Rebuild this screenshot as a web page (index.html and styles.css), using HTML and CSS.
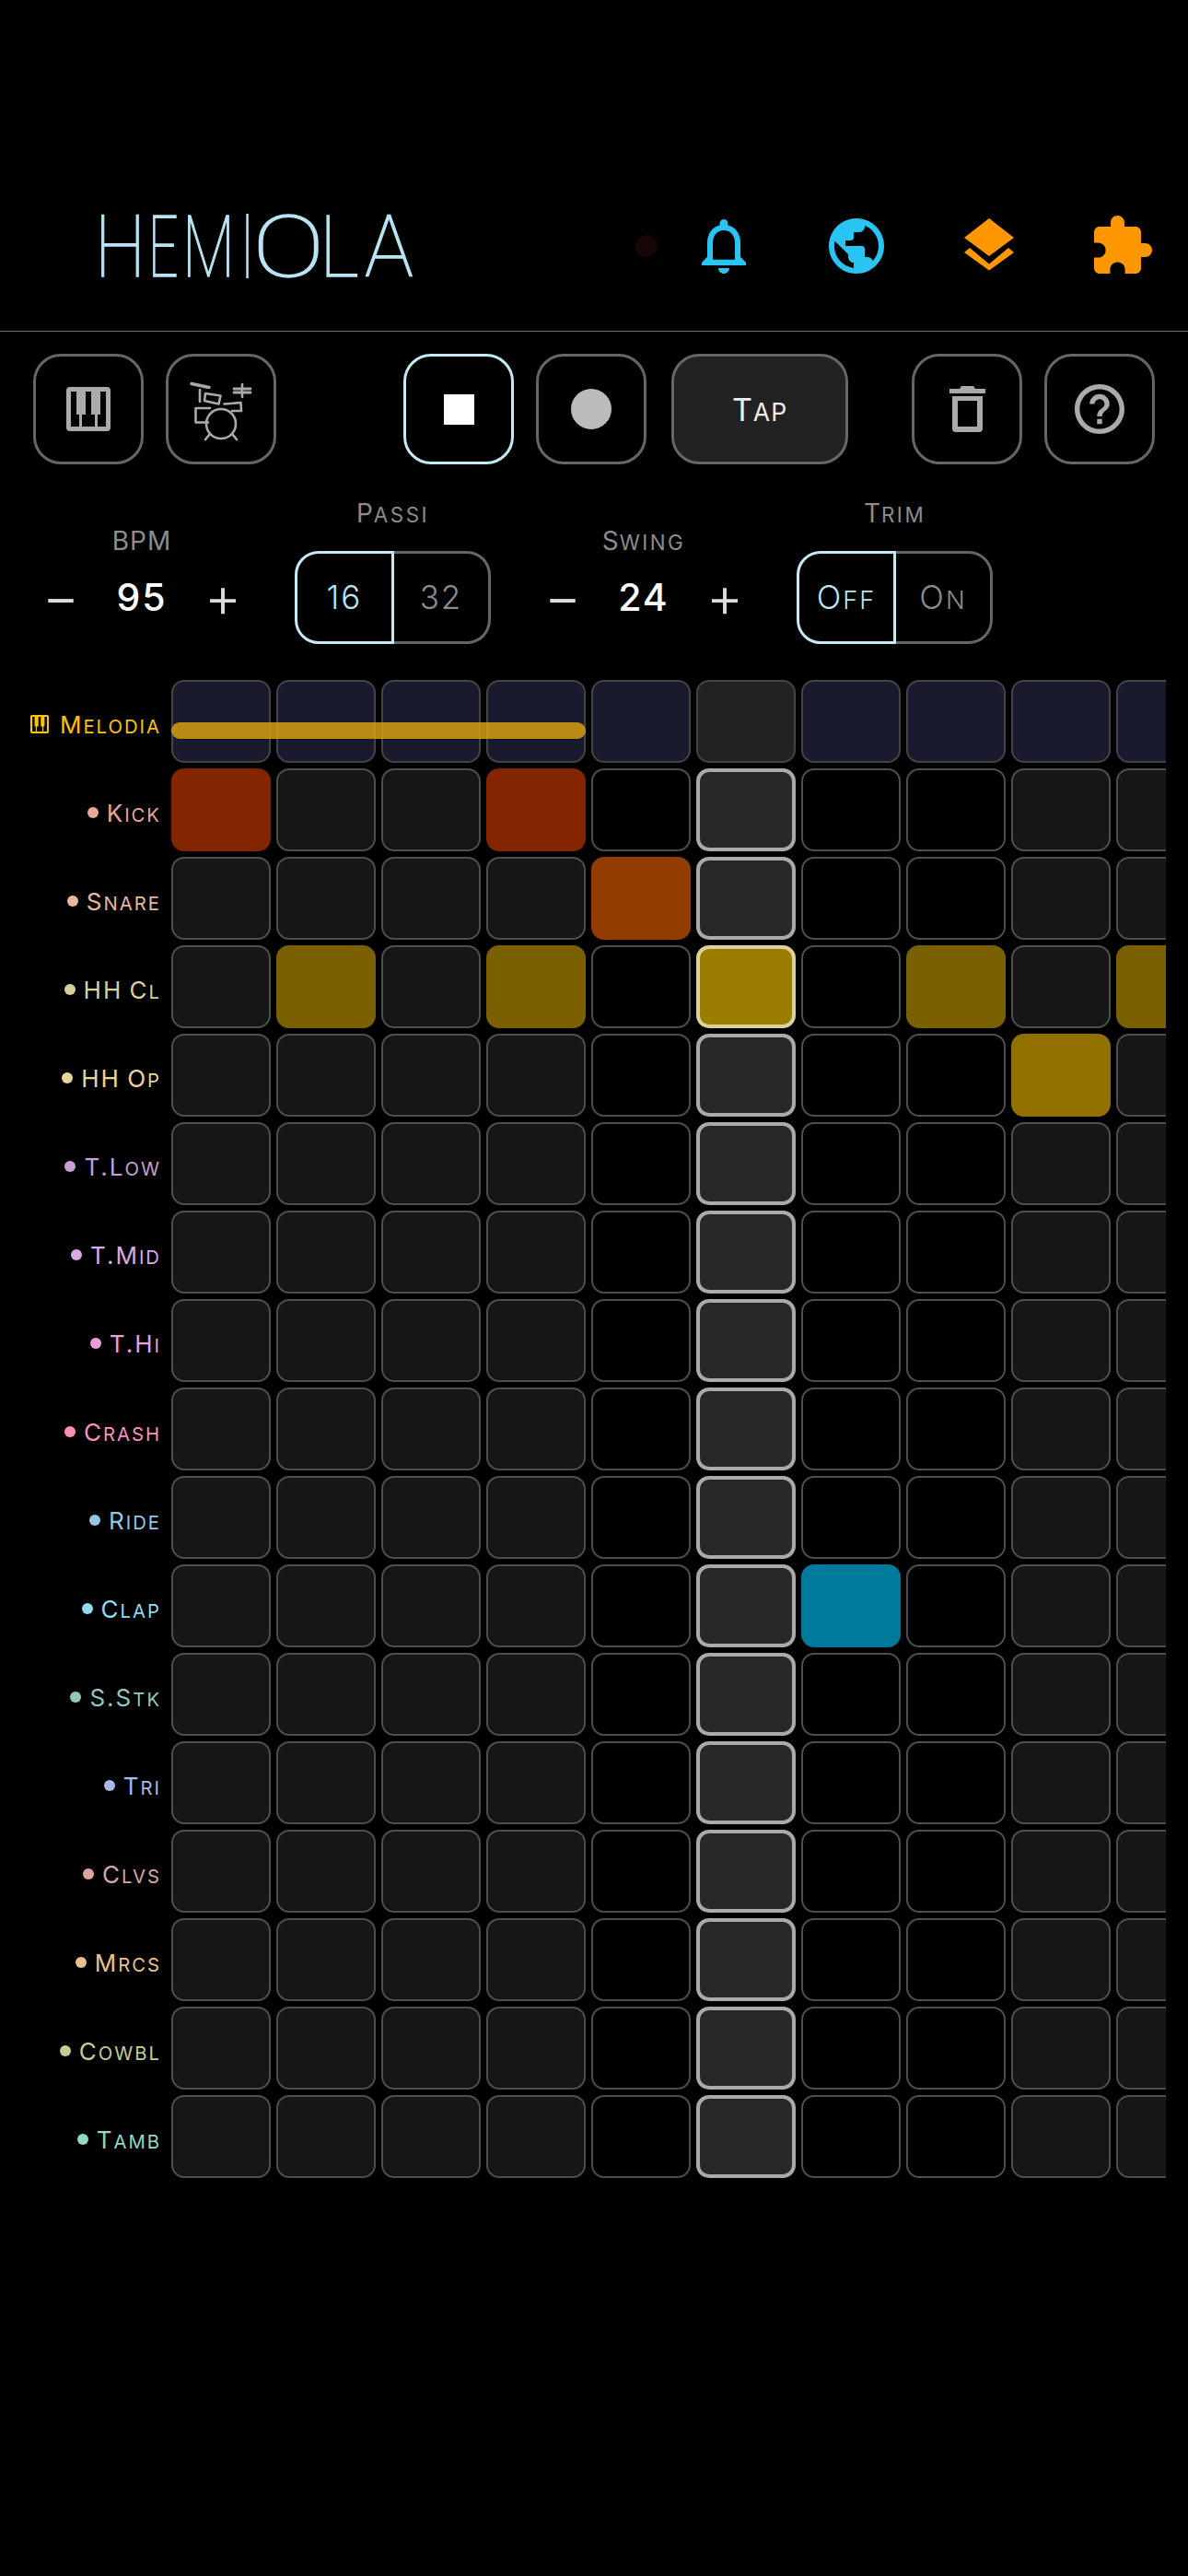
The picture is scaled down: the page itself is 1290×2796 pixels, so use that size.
FILE: index.html
```html
<!DOCTYPE html>
<html lang="it">
<head>
<meta charset="utf-8">
<title>Hemiola</title>
<link rel="stylesheet" href="styles.css">
</head>
<body>
<header class="header">
  <h1 class="logo"><span class="l l-h">H</span><span class="l l-e">E</span><span class="l l-m">M</span><span class="l l-i">I</span><span class="l l-o">O</span><span class="l l-l">L</span><span class="l l-a">A</span></h1>
  <span class="status-dot"></span>
  <svg class="hi hi-bell" viewBox="4 2.5 16 19.5" preserveAspectRatio="none"><path d="M12 22c1.1 0 2-.9 2-2h-4c0 1.1.9 2 2 2zm6-6v-5c0-3.07-1.63-5.64-4.5-6.32V4c0-.83-.67-1.5-1.5-1.5s-1.5.67-1.5 1.5v.68C7.64 5.36 6 7.92 6 11v5l-2 2v1h16v-1l-2-2zm-2 1H8v-6c0-2.48 1.51-4.5 4-4.5s4 2.02 4 4.5v6z"/></svg>
  <svg class="hi hi-globe" viewBox="2 2 20 20"><path d="M12 2C6.48 2 2 6.48 2 12s4.48 10 10 10 10-4.48 10-10S17.52 2 12 2zm-1 17.93c-3.95-.49-7-3.85-7-7.93 0-.62.08-1.21.21-1.79L9 15v1c0 1.1.9 2 2 2v1.93zm6.9-2.54c-.26-.81-1-1.39-1.9-1.39h-1v-3c0-.55-.45-1-1-1H8v-2h2c.55 0 1-.45 1-1V7h2c1.1 0 2-.9 2-2v-.41c2.93 1.19 5 4.06 5 7.41 0 2.08-.8 3.97-2.1 5.39z"/></svg>
  <svg class="hi hi-layers" viewBox="0 0 45 57" preserveAspectRatio="none"><polygon points="22.5,0 45,21 22.5,41 0,21"/><polygon points="5,32 22.5,49.5 40,32 45,37 22.5,56.5 0,37"/></svg>
  <svg class="hi hi-puzzle" viewBox="2 1 21 21"><path d="M20.5 11H19V7c0-1.1-.9-2-2-2h-4V3.5C13 2.12 11.88 1 10.5 1S8 2.12 8 3.5V5H4c-1.1 0-1.99.9-1.99 2v3.8H3.5c1.49 0 2.7 1.21 2.7 2.7s-1.21 2.7-2.7 2.7H2V20c0 1.1.9 2 2 2h3.8v-1.5c0-1.49 1.21-2.7 2.7-2.7 1.49 0 2.7 1.21 2.7 2.7V22H17c1.1 0 2-.9 2-2v-4h1.5c1.38 0 2.5-1.12 2.5-2.5S21.88 11 20.5 11z"/></svg>
</header>

<section class="toolbar">
  <button class="btn"><svg class="tb-piano" viewBox="0 0 48 48"><path fill-rule="evenodd" d="M4 0H44A4 4 0 0 1 48 4V44A4 4 0 0 1 44 48H4A4 4 0 0 1 0 44V4A4 4 0 0 1 4 0ZM5 5H11V30H14V43H5ZM21 5H27V30H31V43H17V30H21ZM37 5H43V43H34V30H37Z"/></svg></button>
  <button class="btn"><svg class="tb-drums" viewBox="206 412 68 66"><g fill="none" stroke="#aaa" stroke-width="2.6" stroke-linecap="round" stroke-linejoin="round"><path d="M208 414.5L227 418.5" stroke-width="3.4"/><path d="M217 421V434"/><path d="M223 425L239.5 427.5L237.5 436.5L222 433Z"/><path d="M243.5 436.5L261.5 435L262 444L252 444"/><path d="M228 441H212.5V456.5H226"/><circle cx="240" cy="458" r="16"/><path d="M227.5 469.5L223 475M252.5 469.5L257 475"/><path d="M254 420H272M254 424H272" stroke-width="2.8"/><path d="M263 415V429"/></g></svg></button>
  <button class="btn btn-on btn-stop"><span class="stop-square"></span></button>
  <button class="btn btn-rec"><span class="rec-circle"></span></button>
  <button class="btn btn-tap">T<span class="sc">ap</span></button>
  <button class="btn btn-trash"><svg class="tb-trash" viewBox="0 0 39 50"><path fill="#aaa" fill-rule="evenodd" d="M0 3H11L13 0H26L28 3H39V8H0ZM3 11H36V46A4 4 0 0 1 32 50H7A4 4 0 0 1 3 46ZM9 16V44H30V16Z"/></svg></button>
  <button class="btn"><svg class="tb-help" viewBox="2 2 20 20"><path d="M11 18h2v-2h-2v2zm1-16C6.48 2 2 6.48 2 12s4.48 10 10 10 10-4.48 10-10S17.52 2 12 2zm0 18c-4.41 0-8-3.59-8-8s3.59-8 8-8 8 3.59 8 8-3.59 8-8 8zm0-14c-2.21 0-4 1.79-4 4h2c0-1.1.9-2 2-2s2 .9 2 2c0 2-3 1.75-3 5h2c0-2.25 3-2.5 3-5 0-2.21-1.79-4-4-4z"/></svg></button>
</section>

<section class="controls">
  <div class="stepper">
    <div class="ctl-label">BPM</div>
    <div class="stepper-row"><span class="sign">−</span><span class="value">95</span><span class="sign">+</span></div>
  </div>
  <div class="seg-col">
    <div class="ctl-label">P<span class="sc">assi</span></div>
    <div class="seg"><span class="seg-item seg-on">16</span><span class="seg-item">32</span></div>
  </div>
  <div class="stepper">
    <div class="ctl-label">S<span class="sc">wing</span></div>
    <div class="stepper-row"><span class="sign">−</span><span class="value">24</span><span class="sign">+</span></div>
  </div>
  <div class="seg-col">
    <div class="ctl-label">T<span class="sc">rim</span></div>
    <div class="seg"><span class="seg-item seg-on">O<span class="sc">ff</span></span><span class="seg-item">O<span class="sc">n</span></span></div>
  </div>
</section>

<main class="grid">
  <div class="row row-melody">
    <div class="name melody-name"><svg class="mini-piano" viewBox="0 0 48 48"><path fill-rule="evenodd" d="M4 0H44A4 4 0 0 1 48 4V44A4 4 0 0 1 44 48H4A4 4 0 0 1 0 44V4A4 4 0 0 1 4 0ZM5 5H11V30H14V43H5ZM21 5H27V30H31V43H17V30H21ZM37 5H43V43H34V30H37Z"/></svg><span>M<span class="sc">elodia</span></span></div>
    <div class="cells"><i class="cell"></i><i class="cell"></i><i class="cell"></i><i class="cell"></i><i class="cell"></i><i class="cell"></i><i class="cell"></i><i class="cell"></i><i class="cell"></i><i class="cell"></i><span class="note"></span></div>
  </div>
  <div class="row t-kick"><div class="name"><b class="dot"></b><span>K<span class="sc">ick</span></span></div><div class="cells"><i class="cell on-kick"></i><i class="cell"></i><i class="cell"></i><i class="cell on-kick"></i><i class="cell"></i><i class="cell"></i><i class="cell"></i><i class="cell"></i><i class="cell"></i><i class="cell"></i></div></div>
  <div class="row t-snare"><div class="name"><b class="dot"></b><span>S<span class="sc">nare</span></span></div><div class="cells"><i class="cell"></i><i class="cell"></i><i class="cell"></i><i class="cell"></i><i class="cell on-snare"></i><i class="cell"></i><i class="cell"></i><i class="cell"></i><i class="cell"></i><i class="cell"></i></div></div>
  <div class="row t-hhcl"><div class="name"><b class="dot"></b><span>HH C<span class="sc">l</span></span></div><div class="cells"><i class="cell"></i><i class="cell on-hhcl"></i><i class="cell"></i><i class="cell on-hhcl"></i><i class="cell"></i><i class="cell hit-hhcl"></i><i class="cell"></i><i class="cell on-hhcl"></i><i class="cell"></i><i class="cell on-hhcl"></i></div></div>
  <div class="row t-hhop"><div class="name"><b class="dot"></b><span>HH O<span class="sc">p</span></span></div><div class="cells"><i class="cell"></i><i class="cell"></i><i class="cell"></i><i class="cell"></i><i class="cell"></i><i class="cell"></i><i class="cell"></i><i class="cell"></i><i class="cell on-hhop"></i><i class="cell"></i></div></div>
  <div class="row t-tlow"><div class="name"><b class="dot"></b><span>T.L<span class="sc">ow</span></span></div><div class="cells"><i class="cell"></i><i class="cell"></i><i class="cell"></i><i class="cell"></i><i class="cell"></i><i class="cell"></i><i class="cell"></i><i class="cell"></i><i class="cell"></i><i class="cell"></i></div></div>
  <div class="row t-tmid"><div class="name"><b class="dot"></b><span>T.M<span class="sc">id</span></span></div><div class="cells"><i class="cell"></i><i class="cell"></i><i class="cell"></i><i class="cell"></i><i class="cell"></i><i class="cell"></i><i class="cell"></i><i class="cell"></i><i class="cell"></i><i class="cell"></i></div></div>
  <div class="row t-thi"><div class="name"><b class="dot"></b><span>T.H<span class="sc">i</span></span></div><div class="cells"><i class="cell"></i><i class="cell"></i><i class="cell"></i><i class="cell"></i><i class="cell"></i><i class="cell"></i><i class="cell"></i><i class="cell"></i><i class="cell"></i><i class="cell"></i></div></div>
  <div class="row t-crash"><div class="name"><b class="dot"></b><span>C<span class="sc">rash</span></span></div><div class="cells"><i class="cell"></i><i class="cell"></i><i class="cell"></i><i class="cell"></i><i class="cell"></i><i class="cell"></i><i class="cell"></i><i class="cell"></i><i class="cell"></i><i class="cell"></i></div></div>
  <div class="row t-ride"><div class="name"><b class="dot"></b><span>R<span class="sc">ide</span></span></div><div class="cells"><i class="cell"></i><i class="cell"></i><i class="cell"></i><i class="cell"></i><i class="cell"></i><i class="cell"></i><i class="cell"></i><i class="cell"></i><i class="cell"></i><i class="cell"></i></div></div>
  <div class="row t-clap"><div class="name"><b class="dot"></b><span>C<span class="sc">lap</span></span></div><div class="cells"><i class="cell"></i><i class="cell"></i><i class="cell"></i><i class="cell"></i><i class="cell"></i><i class="cell"></i><i class="cell on-clap"></i><i class="cell"></i><i class="cell"></i><i class="cell"></i></div></div>
  <div class="row t-sstk"><div class="name"><b class="dot"></b><span>S.S<span class="sc">tk</span></span></div><div class="cells"><i class="cell"></i><i class="cell"></i><i class="cell"></i><i class="cell"></i><i class="cell"></i><i class="cell"></i><i class="cell"></i><i class="cell"></i><i class="cell"></i><i class="cell"></i></div></div>
  <div class="row t-tri"><div class="name"><b class="dot"></b><span>T<span class="sc">ri</span></span></div><div class="cells"><i class="cell"></i><i class="cell"></i><i class="cell"></i><i class="cell"></i><i class="cell"></i><i class="cell"></i><i class="cell"></i><i class="cell"></i><i class="cell"></i><i class="cell"></i></div></div>
  <div class="row t-clvs"><div class="name"><b class="dot"></b><span>C<span class="sc">lvs</span></span></div><div class="cells"><i class="cell"></i><i class="cell"></i><i class="cell"></i><i class="cell"></i><i class="cell"></i><i class="cell"></i><i class="cell"></i><i class="cell"></i><i class="cell"></i><i class="cell"></i></div></div>
  <div class="row t-mrcs"><div class="name"><b class="dot"></b><span>M<span class="sc">rcs</span></span></div><div class="cells"><i class="cell"></i><i class="cell"></i><i class="cell"></i><i class="cell"></i><i class="cell"></i><i class="cell"></i><i class="cell"></i><i class="cell"></i><i class="cell"></i><i class="cell"></i></div></div>
  <div class="row t-cowbl"><div class="name"><b class="dot"></b><span>C<span class="sc">owbl</span></span></div><div class="cells"><i class="cell"></i><i class="cell"></i><i class="cell"></i><i class="cell"></i><i class="cell"></i><i class="cell"></i><i class="cell"></i><i class="cell"></i><i class="cell"></i><i class="cell"></i></div></div>
  <div class="row t-tamb"><div class="name"><b class="dot"></b><span>T<span class="sc">amb</span></span></div><div class="cells"><i class="cell"></i><i class="cell"></i><i class="cell"></i><i class="cell"></i><i class="cell"></i><i class="cell"></i><i class="cell"></i><i class="cell"></i><i class="cell"></i><i class="cell"></i></div></div>
</main>
</body>
</html>
```
FILE: styles.css
```css
* { box-sizing: border-box; }
html, body { margin: 0; padding: 0; background: #000; }
body { width: 1290px; height: 2796px; overflow: hidden; font-family: Inter, "Liberation Sans", sans-serif; color: #fff; }

/* Simulated small caps: lowercase letters shown as smaller capitals */
.sc { font-size: .78em; text-transform: uppercase; }

/* Header */
.header { height: 360px; padding: 174px 0 0 103px; border-bottom: 1px solid #6e7378; display: flex; align-items: flex-start; }
.logo { margin: 50px 0 0; width: 587px; height: 90px; display: flex; font: 100 92px/90px Roboto, sans-serif; color: #b8e4f4; -webkit-text-stroke: 1.3px #b8e4f4; }
.l { display: block; flex: none; transform-origin: 0 50%; }
.l-h { width: 58px; transform: scaleX(.85); }
.l-e { width: 37px; transform: scaleX(.62); }
.l-m { width: 66px; transform: scaleX(.72); }
.l-i { width: 10px; transform: scaleX(.38); -webkit-text-stroke-width: 4px; }
.l-o { width: 73px; transform: scaleX(1.28); }
.l-l { width: 49px; transform: scaleX(.9); }
.l-a { width: 52px; transform: scaleX(.96); }
.status-dot { flex: none; width: 24px; height: 24px; margin-top: 81px; border-radius: 50%; background: #170606; }
.hi { flex: none; display: block; }
.hi-bell { width: 48px; height: 59px; margin: 64px 0 0 48px; fill: #29c4f2; }
.hi-globe { width: 60px; height: 60px; margin: 63px 0 0 90px; fill: #29c4f2; }
.hi-layers { width: 54px; height: 57px; margin: 63px 0 0 87px; fill: #ff9800; }
.hi-puzzle { width: 63px; height: 63px; margin: 60px 0 0 87px; fill: #ff9800; }

/* Toolbar */
.toolbar { display: flex; padding: 24px 0 0 36px; gap: 24px; }
.btn { flex: none; width: 120px; height: 120px; border: 3px solid #666; border-radius: 30px; background: #000; padding: 0; display: flex; align-items: center; justify-content: center; font-family: inherit; color: #eee; }
.btn-stop { margin-left: 114px; }
.btn-on { border-color: #c4eaf6; }
.btn-tap { display: block; width: 192px; margin-left: 3px; background: #222; font-size: 34px; letter-spacing: 1px; text-align: center; }
.btn-trash { margin-left: 45px; }
.stop-square { width: 33px; height: 33px; background: #fff; }
.rec-circle { width: 44px; height: 44px; border-radius: 50%; background: #bbb; }
.tb-piano { width: 48px; height: 48px; fill: #aaa; }
.tb-drums { width: 68px; height: 66px; margin-top: 6px; }
.tb-trash { width: 39px; height: 50px; }
.tb-help { width: 54px; height: 54px; fill: #aaa; }

/* Controls */
.controls { display: flex; align-items: flex-start; gap: 48px; padding: 36px 0 0 36px; }
.ctl-label { height: 34px; font-size: 28px; line-height: 34px; letter-spacing: 1px; text-align: center; color: #8c8c8c; }
.ctl-label .sc { font-size: .8em; letter-spacing: 2.5px; }
.stepper { flex: none; width: 236px; padding-top: 30px; }
.stepper-row { display: flex; align-items: center; height: 60px; margin-top: 14px; }
.sign { flex: none; width: 60px; text-align: center; font-size: 62px; font-weight: 300; line-height: 60px; color: #ddd; }
.value { flex: none; width: 116px; text-align: center; font-size: 41px; font-weight: 500; letter-spacing: 2px; color: #fff; }
.seg-col { flex: none; width: 213px; }
.seg { display: flex; height: 101px; margin-top: 24px; }
.seg-item { flex: 1 1 0; display: block; line-height: 95px; text-align: center; border: 3px solid #666; border-left: 0; border-radius: 0 26px 26px 0; font-size: 35px; font-weight: 300; letter-spacing: 2px; color: #8c8c8c; }
.seg-item.seg-on { border: 3px solid #c4eaf6; border-radius: 26px 0 0 26px; color: #b8e4f4; }

/* Sequencer grid */
.grid { margin: 39px 0 0; width: 1266px; overflow: hidden; display: flex; flex-direction: column; gap: 6px; }
.row { display: flex; align-items: center; gap: 11px; height: 90px; }
.name { flex: none; width: 175px; padding-top: 6px; display: flex; align-items: center; justify-content: flex-end; gap: 9px; font-size: 26px; letter-spacing: 2px; word-spacing: -2px; color: var(--tc); white-space: nowrap; }
.dot { flex: none; width: 12px; height: 12px; border-radius: 50%; background: var(--tc); }
.melody-name { color: #ffc107; gap: 12px; }
.mini-piano { flex: none; width: 20px; height: 20px; fill: #ffc107; }
.cells { position: relative; display: flex; gap: 6px; }
.cell { display: block; flex: none; width: 108px; height: 90px; border: 2px solid #4e4e4e; border-radius: 14px; background: #161616; }
.cell:nth-child(5), .cell:nth-child(7), .cell:nth-child(8) { background: #000; }
.cell:nth-child(6) { border: 4px solid #aaa; background: #282828; }
.row-melody .cell { border: 2px solid #444; background: #1a1a2e; }
.row-melody .cell:nth-child(6) { background: #222; }
.note { position: absolute; left: 0; top: 46px; width: 450px; height: 18px; border-radius: 9px; background: rgba(212, 160, 16, .85); }
.cell.on-kick { border-color: #822500; background: #822500; }
.cell.on-snare { border-color: #923c00; background: #923c00; }
.cell.on-hhcl { border-color: #7a6000; background: #7a6000; }
.cell.hit-hhcl { border-color: #dcd09c; background: #9a7c00; }
.cell.on-hhop { border-color: #927000; background: #927000; }
.cell.on-clap { border-color: #007a9a; background: #007a9a; }

.t-kick { --tc: #e8a898; }
.t-snare { --tc: #e8b89a; }
.t-hhcl { --tc: #d8d09c; }
.t-hhop { --tc: #e6d69a; }
.t-tlow { --tc: #c89ed8; }
.t-tmid { --tc: #dca8e8; }
.t-thi { --tc: #f09cd8; }
.t-crash { --tc: #ff90b8; }
.t-ride { --tc: #90c8e0; }
.t-clap { --tc: #90dcf0; }
.t-sstk { --tc: #90c8c0; }
.t-tri { --tc: #a8b8e8; }
.t-clvs { --tc: #d8a8a0; }
.t-mrcs { --tc: #e8c090; }
.t-cowbl { --tc: #c0d090; }
.t-tamb { --tc: #90d8c8; }
```
